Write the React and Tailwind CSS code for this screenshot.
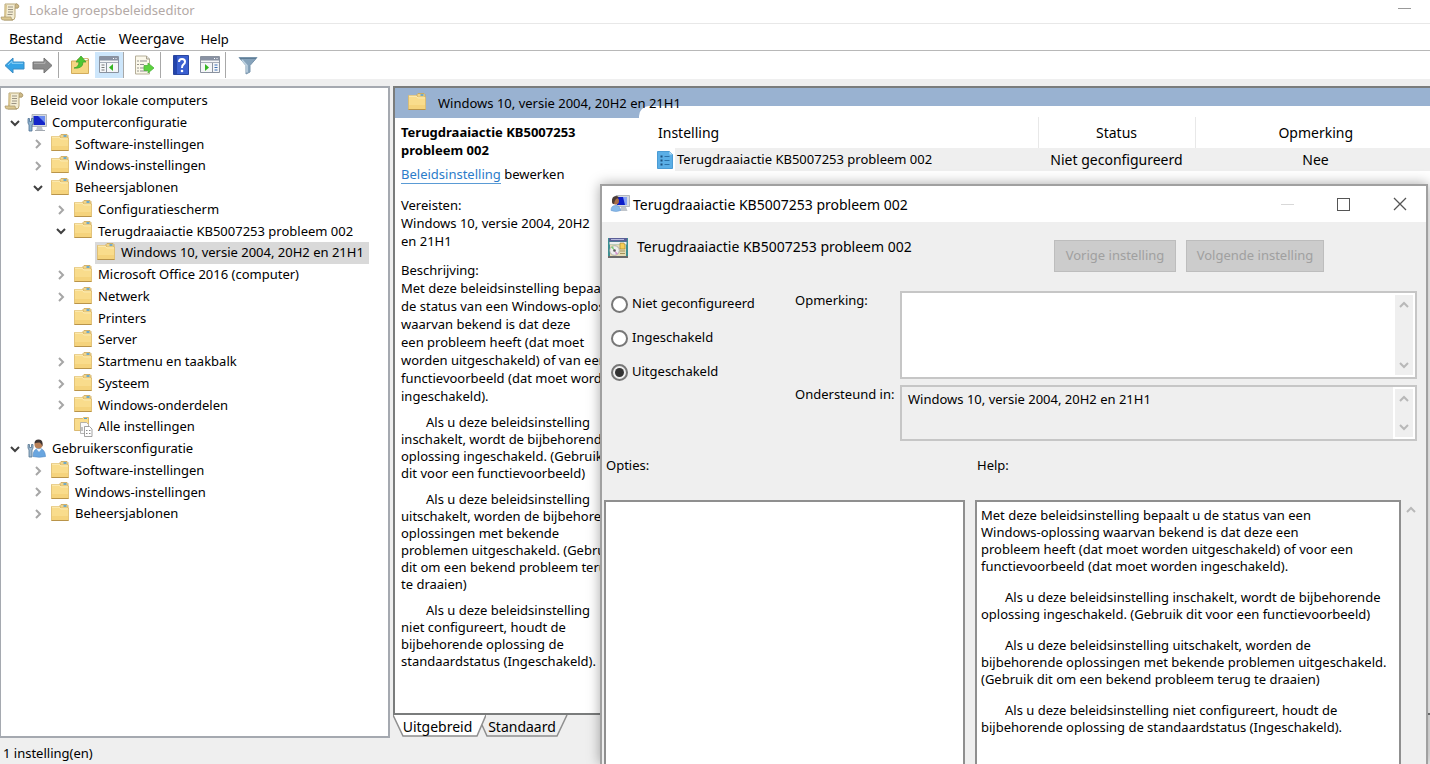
import { useState } from "react";

const treeItems = [
  { id: 1, label: "Computerconfiguratie", level: 0, state: "open", icon: "computer" },
  { id: 2, label: "Software-instellingen", level: 1, state: "closed", icon: "folder" },
  { id: 3, label: "Windows-instellingen", level: 1, state: "closed", icon: "folder" },
  { id: 4, label: "Beheersjablonen", level: 1, state: "open", icon: "folder" },
  { id: 5, label: "Configuratiescherm", level: 2, state: "closed", icon: "folder" },
  { id: 6, label: "Terugdraaiactie KB5007253 probleem 002", level: 2, state: "open", icon: "folder" },
  { id: 7, label: "Windows 10, versie 2004, 20H2 en 21H1", level: 3, icon: "folder" },
  { id: 8, label: "Microsoft Office 2016 (computer)", level: 2, state: "closed", icon: "folder" },
  { id: 9, label: "Netwerk", level: 2, state: "closed", icon: "folder" },
  { id: 10, label: "Printers", level: 2, icon: "folder" },
  { id: 11, label: "Server", level: 2, icon: "folder" },
  { id: 12, label: "Startmenu en taakbalk", level: 2, state: "closed", icon: "folder" },
  { id: 13, label: "Systeem", level: 2, state: "closed", icon: "folder" },
  { id: 14, label: "Windows-onderdelen", level: 2, state: "closed", icon: "folder" },
  { id: 15, label: "Alle instellingen", level: 2, icon: "all" },
  { id: 16, label: "Gebruikersconfiguratie", level: 0, state: "open", icon: "user" },
  { id: 17, label: "Software-instellingen", level: 1, state: "closed", icon: "folder" },
  { id: 18, label: "Windows-instellingen", level: 1, state: "closed", icon: "folder" },
  { id: 19, label: "Beheersjablonen", level: 1, state: "closed", icon: "folder" },
];

const indents = ["pl-[8px]", "pl-[31px]", "pl-[54px]", "pl-[77px]"];

const description = [
  [
    "Als u deze beleidsinstelling",
    "inschakelt, wordt de bijbehorende",
    "oplossing ingeschakeld. (Gebruik",
    "dit voor een functievoorbeeld)",
  ],
  [
    "Als u deze beleidsinstelling",
    "uitschakelt, worden de bijbehorende",
    "oplossingen met bekende",
    "problemen uitgeschakeld. (Gebruik",
    "dit om een bekend probleem terug",
    "te draaien)",
  ],
  [
    "Als u deze beleidsinstelling",
    "niet configureert, houdt de",
    "bijbehorende oplossing de",
    "standaardstatus (Ingeschakeld).",
  ],
];

const helpText = [
  [
    "Als u deze beleidsinstelling inschakelt, wordt de bijbehorende",
    "oplossing ingeschakeld. (Gebruik dit voor een functievoorbeeld)",
  ],
  [
    "Als u deze beleidsinstelling uitschakelt, worden de",
    "bijbehorende oplossingen met bekende problemen uitgeschakeld.",
    "(Gebruik dit om een bekend probleem terug te draaien)",
  ],
  [
    "Als u deze beleidsinstelling niet configureert, houdt de",
    "bijbehorende oplossing de standaardstatus (Ingeschakeld).",
  ],
];

const states = ["Niet geconfigureerd", "Ingeschakeld", "Uitgeschakeld"];

function Lines({ lines, className }) {
  return (
    <p className={className}>
      {lines.map((line) => (
        <span key={line} className="block whitespace-nowrap">
          {line}
        </span>
      ))}
    </p>
  );
}

function Chevron({ dir, className }) {
  const paths = {
    up: "M2 7l4-4 4 4",
    down: "M2 4l4 4 4-4",
    right: "M4 2l4 4-4 4",
  };
  return (
    <svg viewBox="0 0 12 12" className={className} fill="none" stroke="currentColor" strokeWidth="2">
      <path d={paths[dir]} />
    </svg>
  );
}

function ScrollIcon() {
  return (
    <svg viewBox="0 0 20 20" className="size-5 shrink-0">
      <path d="M5 2h12q2 1 1 4h-3v9q0 3-3 3H4l1-5z" fill="#f3ecd2" stroke="#b9a878" />
      <path d="M5 3l2 0-1 14-2 0z" fill="#d8c48f" />
      <path d="M15 6V3q1-2 3-.5T18 6z" fill="#cdb987" stroke="#a8956a" strokeWidth=".7" />
      <path d="M1 15h10q0 3 2 3H3q-2 0-2-3z" fill="#dcc890" stroke="#a8956a" strokeWidth=".7" />
      <path d="M8 5h5M8 7.500h5M8 10h5M7.500 12.500h5" stroke="#9b9484" />
    </svg>
  );
}

function FolderIcon() {
  return (
    <svg viewBox="0 0 20 20" className="size-5 shrink-0">
      <path d="M10 1.500l1-1h6l1 1V5h-8z" fill="#f0d48a" stroke="#c9a354" strokeWidth=".8" />
      <path d="M13.500 2h3" stroke="#4f9fd8" strokeWidth="1.600" />
      <path d="M1.500 2.500h8l1.500 1.500h7.500v12.500h-17z" fill="#f9dc8c" stroke="#dcb968" strokeWidth=".8" />
      <path d="M2 3.200h7.200l1.500 1.700H18" stroke="#fdeebb" fill="none" />
      <path d="M2 12h16v4H2z" fill="#f5d37c" />
      <path d="M1.500 16.500h17" stroke="#b9944a" />
    </svg>
  );
}

function AllSettingsIcon() {
  return (
    <svg viewBox="0 0 20 20" className="size-5 shrink-0">
      <path d="M1.500 1.500h8l1-1h5v13h-14z" fill="#f9dc8c" stroke="#d2ac5c" strokeWidth=".8" />
      <path d="M11 1.500h3" stroke="#4f9fd8" />
      <path d="M7.500 5.500h6l2 2v9h-8z" fill="#fafafa" stroke="#a3a3a3" strokeWidth=".8" />
      <path d="M11.500 9.500h5l2.500 2.500v7.500h-7.500z" fill="#fff" stroke="#8d8d8d" strokeWidth=".8" />
      <path d="M13 13.500h1.500M16 13.500h1.500M13 16.500h1.500M16 16.500h1.500M9 10v4" stroke="#888" />
    </svg>
  );
}

function ComputerIcon() {
  return (
    <svg viewBox="0 0 20 20" className="size-5 shrink-0">
      <path d="M5 1.500h14.500v12H5z" fill="#d5d9df" stroke="#a3a9b1" strokeWidth=".8" />
      <path d="M6.500 3h11.500v9H6.500z" fill="#1526c9" />
      <path d="M11 3h7v7z" fill="#6b8cf0" />
      <path d="M10 14h5l1 3.500H9z" fill="#c0c5cb" />
      <path d="M8 17.500h10" stroke="#a3a9b1" />
      <path d="M1 5.500h1.500v3h2v-3H6.500V10L5 12v6H2v-6l-1-2z" fill="#8fb2cf" stroke="#4b6f92" strokeWidth=".8" />
    </svg>
  );
}

function UserIcon() {
  return (
    <svg viewBox="0 0 20 20" className="size-5 shrink-0">
      <path d="M6 17.500q0-8 6-8t6.500 8q-6 1.500-12.500 0z" fill="#69a6e0" stroke="#5a90ca" strokeWidth=".7" />
      <path d="M9.500 10l2.500 3 2.500-3z" fill="#eef4fb" />
      <circle cx="11.500" cy="5.500" r="4" fill="#b98057" />
      <path d="M7.500 4.500q0-4 4-4t4 4v3q-1-3-3-4-3 0-5 1z" fill="#3c3433" />
      <path d="M1 5.500h1.500v3h2v-3H6V9l-1 2v7H2v-7l-1-2z" fill="#9fb9d0" stroke="#54748f" strokeWidth=".8" />
    </svg>
  );
}

function DialogIcon() {
  return (
    <svg viewBox="0 0 20 20" className="size-5 shrink-0">
      <path d="M6 1.500h13.500v11H6z" fill="#d5d9df" stroke="#a3a9b1" strokeWidth=".8" />
      <path d="M7 3h9v8H7z" fill="#0c1cc8" />
      <path d="M13 3h4v8h-2z" fill="#86a2f5" />
      <path d="M11 13h5l1.500 4h-8z" fill="#c0c5cb" />
      <path d="M1 16.500q0-5 4.500-5t5 5q-4.500 2-9.500 0z" fill="#86b9ea" stroke="#6a9bd0" strokeWidth=".6" />
      <circle cx="5.500" cy="7" r="3.500" fill="#a86e48" />
      <path d="M2 8q-.500-6 4-6 3 0 2.500 2-3.500 0-4.500 6Q2 10 2 8z" fill="#4a3b35" />
    </svg>
  );
}

function PackageIcon() {
  return (
    <svg viewBox="0 0 20 20" className="size-5 shrink-0">
      <path d="M0 0h20v20H0z" fill="#3d8f92" />
      <path d="M1 0h18v3.500H1z" fill="#5b5f98" />
      <path d="M3 1.500h13" stroke="#b6b9dd" />
      <path d="M1.500 4h17v2.500h-17z" fill="#eee" />
      <path d="M2 6.500h16V18H2z" fill="#e5dcb4" />
      <circle cx="6.500" cy="12.500" r="4.800" fill="#eee" stroke="#999" strokeWidth=".7" />
      <path d="M6.500 12.500L3 9.500l2-1.300z" fill="#7ccb72" />
      <path d="M6.500 12.500l3.500 3-2 1.300z" fill="#d48fd0" />
      <circle cx="6.500" cy="12.500" r="1.300" fill="#555" />
      <path d="M12 5h4l1 2v4h-5z" fill="#f5cd57" stroke="#9c7c29" strokeWidth=".6" />
      <path d="M12 13h5M12 15.500h5" stroke="#a3935c" />
      <path d="M0 19h20" stroke="#6a6a6a" strokeWidth="2" />
    </svg>
  );
}

function SettingIcon() {
  return (
    <svg viewBox="0 0 18 18" className="size-[18px] shrink-0">
      <path d="M1.500.500h12l3 3v14h-15z" fill="#5aaee6" stroke="#4a9bd4" />
      <path d="M13.500.500v3h3z" fill="#b9dff6" />
      <path d="M4.500 5.500h2M4.500 9.500h2M4.500 13.500h2" stroke="#1c4f7d" strokeWidth="2" />
      <path d="M8.500 5.500h5M8.500 9.500h5M8.500 13.500h5" stroke="#2b71a8" />
    </svg>
  );
}

const treeIcons = {
  folder: FolderIcon,
  all: AllSettingsIcon,
  computer: ComputerIcon,
  user: UserIcon,
};

function ArrowIcon({ back }) {
  return (
    <svg viewBox="0 0 22 20" className="h-5 w-[22px]">
      {back ? (
        <path d="M1 10.500l8-7.500v4h11v7H9v4z" fill="#35a3e6" stroke="#3b8cc4" />
      ) : (
        <path d="M21 10.500l-8-7.500v4H2v7h11v4z" fill="#8b8b8b" stroke="#757575" />
      )}
      {back ? (
        <path d="M4 10l4-3.700v2h11" fill="none" stroke="#92d4f7" />
      ) : (
        <path d="M3 8.300h11v-2" fill="none" stroke="#b5b5b5" />
      )}
    </svg>
  );
}

function FolderUpIcon() {
  return (
    <svg viewBox="0 0 20 20" className="size-5">
      <path d="M1.500 6h5l1.500-2h10.500v14.500h-17z" fill="#f5d683" stroke="#d2ac5c" />
      <path d="M12 3.500h6v2h-6z" fill="#fff" stroke="#c49b48" strokeWidth=".6" />
      <path d="M4 13q5-1 5-6H6l5-6 5 6h-3q0 7-9 6z" fill="#4cc730" stroke="#3fa22c" strokeWidth=".8" />
    </svg>
  );
}

function PaneIcon({ flip }) {
  return (
    <svg viewBox="0 0 20 18" className="h-[18px] w-5">
      <path d="M.500.500h19v16H.500z" fill="#f5f6f8" stroke="#8a929f" />
      <path d="M1 1h18v3.500H1z" fill="#8992a3" />
      <path d="M14 2.500h1M16.500 2.500h1" stroke="#fff" />
      <path d="M1 6.500h18" stroke="#a8aeb9" />
      {flip ? (
        <>
          <path d="M12.500 7v9.500" stroke="#8a929f" />
          <path d="M5 8l4 3.500L5 15z" fill="#35b522" />
          <path d="M14.500 9h3M14.500 11.500h3M14.500 14h3" stroke="#3a6fb5" />
        </>
      ) : (
        <>
          <path d="M7.500 7v9.500" stroke="#8a929f" />
          <path d="M14 8l-4 3.500 4 3.500z" fill="#35b522" />
          <path d="M2.500 9h3M2.500 11.500h3M2.500 14h3" stroke="#777" />
        </>
      )}
    </svg>
  );
}

function ExportIcon() {
  return (
    <svg viewBox="0 0 20 20" className="size-5">
      <path d="M1.500 1h11l3 3v15h-14z" fill="#fbf8ea" stroke="#b5ae99" />
      <path d="M12.500 1v3h3" fill="#ddd" stroke="#aaa38d" />
      <path d="M3.500 6h1M3.500 9.500h1M3.500 13h1M3.500 16h1" stroke="#333" />
      <path d="M6 6h7M6 9.500h4M6 13h4M6 16h7" stroke="#8f8f8f" />
      <path d="M10 10.500h4V8l6 5-6 5v-2.500h-4z" fill="#5bd23e" stroke="#4fb33c" strokeWidth=".8" />
    </svg>
  );
}

function HelpIcon() {
  return (
    <svg viewBox="0 0 16 20" className="h-5 w-4">
      <path d="M.500.500h15v19H.500z" fill="#3a5fd0" stroke="#2a469f" />
      <path d="M1 1h3v18H1z" fill="#2344ab" />
      <path d="M6 7q0-3 3-3t3 2.700q0 1.600-1.500 2.600T9 13" fill="none" stroke="#fff" strokeWidth="2" />
      <circle cx="9" cy="16" r="1.300" fill="#fff" />
    </svg>
  );
}

function FunnelIcon() {
  return (
    <svg viewBox="0 0 20 20" className="size-5">
      <path d="M1 2.500h18l-7 8V17l-4 2v-8.500z" fill="#86a3bb" stroke="#7a96ad" />
      <path d="M2 3.500h16" stroke="#5f7d96" />
      <path d="M4 5l5 5.500v7" stroke="#c2d5e3" fill="none" strokeWidth="1.500" />
    </svg>
  );
}

function Separator() {
  return <span className="h-[26px] w-px bg-[#a8a8a8]" />;
}

function ScrollButtons() {
  return (
    <div className="flex w-[22px] shrink-0 flex-col items-center justify-between border-2 border-white bg-[#efefef] pt-[5px] pb-[4px] text-[#b8b8b8]">
      <button aria-label="Omhoog">
        <Chevron dir="up" className="size-3" />
      </button>
      <button aria-label="Omlaag">
        <Chevron dir="down" className="size-3" />
      </button>
    </div>
  );
}

function Tree() {
  const [selected, setSelected] = useState(7);

  return (
    <nav className="w-[390px] shrink-0 border-2 border-l border-[#a5a9b0] bg-white">
      <ul className="mt-[2px] grid h-[435px] auto-rows-fr text-[13px]">
        <li className="flex items-center gap-[6px] pl-[3px]">
          <ScrollIcon />
          Beleid voor lokale computers
        </li>
        {treeItems.map((item) => {
          const Icon = treeIcons[item.icon];
          return (
            <li key={item.id} className={`flex items-center ${indents[item.level]}`}>
              <span className="flex w-[17px] shrink-0">
                {item.state === "open" && <Chevron dir="down" className="size-3 text-[#404040]" />}
                {item.state === "closed" && <Chevron dir="right" className="size-3 text-[#a6a6a6]" />}
              </span>
              <button
                onClick={() => setSelected(item.id)}
                className={`flex h-[22px] items-center gap-[5px] pr-[5px] pl-[1px] whitespace-nowrap ${
                  selected === item.id ? "bg-[#d9d9d9]" : ""
                }`}
              >
                <Icon />
                {item.label}
              </button>
            </li>
          );
        })}
      </ul>
    </nav>
  );
}

function PolicyDialog() {
  const [value, setValue] = useState("Uitgeschakeld");

  return (
    <section
      role="dialog"
      aria-labelledby="dialog-title"
      className="absolute top-[184px] right-[2px] bottom-0 left-[600px] z-20 flex flex-col overflow-hidden border-2 border-b-0 border-[#a0a0a0] bg-[#efefef] text-[13px] shadow-[0_0_12px_rgba(0,0,0,0.35)]"
    >
      <header className="flex h-[36px] shrink-0 items-center gap-[3px] bg-white pl-[8px]">
        <DialogIcon />
        <h2 id="dialog-title" className="text-[14px]">
          Terugdraaiactie KB5007253 probleem 002
        </h2>
        <div className="ml-auto flex items-center gap-[43px] pr-[19px] text-[#555]">
          <button aria-label="Minimaliseren" className="h-px w-[13px] bg-[#d8d8d8]" />
          <button aria-label="Maximaliseren" className="size-[13px] border border-[#555]" />
          <button aria-label="Sluiten">
            <svg viewBox="0 0 14 14" className="size-[14px]" stroke="currentColor" strokeWidth="1.300">
              <path d="M1 1l12 12M13 1L1 13" />
            </svg>
          </button>
        </div>
      </header>

      <div className="flex h-[69px] shrink-0 items-start pt-[16px] pr-[102px] pl-[6px]">
        <PackageIcon />
        <p className="pl-[9px] text-[14px] leading-[18px]">Terugdraaiactie KB5007253 probleem 002</p>
        <div className="mt-[2px] ml-auto flex gap-[10px] text-[#a0a0a0]">
          <button disabled className="h-8 w-[122px] border border-[#bdbdbd] bg-[#cccccc] whitespace-nowrap">
            Vorige instelling
          </button>
          <button disabled className="h-8 w-[138px] border border-[#bdbdbd] bg-[#cccccc] whitespace-nowrap">
            Volgende instelling
          </button>
        </div>
      </div>

      <div className="flex shrink-0 pr-[9px]">
        <fieldset className="flex w-[193px] shrink-0 flex-col gap-[14px] pt-[3px] pl-[9px]">
          {states.map((state) => (
            <label key={state} className="flex h-5 items-center gap-[4px]">
              <input
                type="radio"
                name="state"
                checked={value === state}
                onChange={() => setValue(state)}
                className="size-[17px] appearance-none rounded-full border-2 border-[#777] bg-white p-[2px] checked:bg-[#333] checked:bg-clip-content"
              />
              {state}
            </label>
          ))}
        </fieldset>
        <div className="grid flex-1 grid-cols-[105px_1fr] gap-y-[6px]">
          <label htmlFor="comment">Opmerking:</label>
          <div className="flex h-[88px] border-2 border-[#c6c6c6] bg-white">
            <textarea id="comment" className="flex-1 resize-none bg-white outline-none" />
            <ScrollButtons />
          </div>
          <label htmlFor="supported" className="whitespace-nowrap">
            Ondersteund in:
          </label>
          <div className="flex h-14 border-2 border-[#c6c6c6] bg-[#efefef]">
            <textarea
              id="supported"
              readOnly
              className="flex-1 resize-none px-[6px] pt-[3px] outline-none"
              value="Windows 10, versie 2004, 20H2 en 21H1"
            />
            <ScrollButtons />
          </div>
        </div>
      </div>

      <div className="flex min-h-0 flex-1 gap-[10px] pt-[15px] pr-[25px] pl-[2px]">
        <div className="flex w-[361px] shrink-0 flex-col">
          <h3 className="h-[44px] pl-[2px]">Opties:</h3>
          <div className="flex-1 border-2 border-b-0 border-[#8f8f8f] bg-white" />
        </div>
        <div className="relative flex flex-1 flex-col">
          <h3 className="h-[44px] pl-[2px]">Help:</h3>
          <div className="flex-1 border-2 border-b-0 border-[#8f8f8f] bg-white pt-[5px] pl-[4px] leading-[17px]">
            <Lines
              lines={[
                "Met deze beleidsinstelling bepaalt u de status van een",
                "Windows-oplossing waarvan bekend is dat deze een",
                "probleem heeft (dat moet worden uitgeschakeld) of voor een",
                "functievoorbeeld (dat moet worden ingeschakeld).",
              ]}
            />
            {helpText.map((lines) => (
              <Lines key={lines[0]} lines={lines} className="mt-[14px] indent-[24px] [&>span+span]:indent-0" />
            ))}
          </div>
          <button aria-label="Omhoog" className="absolute top-[49px] -right-[16px] text-[#b8b8b8]">
            <Chevron dir="up" className="size-3" />
          </button>
        </div>
      </div>
    </section>
  );
}

export default function App() {
  return (
    <main className="relative flex h-screen flex-col overflow-hidden bg-[#efefef] font-['Noto_Sans','Open_Sans',sans-serif] text-[13px] text-black">
      <header className="flex h-6 shrink-0 items-center gap-[9px] border-b border-[#e8e8e8] bg-white text-[#b3a9a6]">
        <ScrollIcon />
        <h1 className="pb-[2px]">Lokale groepsbeleidseditor</h1>
        <button aria-label="Minimaliseren" className="mr-[19px] mb-[6px] ml-auto h-px w-[13px] bg-[#999]" />
      </header>

      <nav className="flex h-[27px] shrink-0 items-baseline gap-[13px] border-b border-[#b8b8b8] bg-white pt-[4px] pl-[9px]">
        <button className="text-[14px]">Bestand</button>
        <button>Actie</button>
        <button className="text-[14px]">Weergave</button>
        <button className="ml-[3px]">Help</button>
      </nav>

      <div className="mb-[7px] flex h-7 shrink-0 items-center bg-white pl-[4px]">
        <button aria-label="Vorige">
          <ArrowIcon back />
        </button>
        <button aria-label="Volgende" className="mr-[5px] ml-[5px]">
          <ArrowIcon />
        </button>
        <Separator />
        <button aria-label="Bovenliggende map" className="mr-[5px] ml-[11px]">
          <FolderUpIcon />
        </button>
        <button aria-label="Consolestructuur" className="flex h-[26px] w-7 items-center justify-center bg-[#cde6fb]">
          <PaneIcon />
        </button>
        <Separator />
        <button aria-label="Lijst exporteren" className="mr-[6px] ml-[10px]">
          <ExportIcon />
        </button>
        <Separator />
        <button aria-label="Help" className="mr-[11px] ml-[12px]">
          <HelpIcon />
        </button>
        <button aria-label="Actievenster" className="mr-[5px]">
          <PaneIcon flip />
        </button>
        <Separator />
        <button aria-label="Filter" className="ml-[12px]">
          <FunnelIcon />
        </button>
      </div>

      <div className="flex min-h-0 flex-1">
        <Tree />
        <div className="ml-[3px] flex min-w-0 flex-1 flex-col">
          <section className="flex min-h-0 flex-1 flex-col border-2 border-r-0 border-[#7a7c7c] bg-white">
            <header className="flex h-[30px] shrink-0 items-center gap-[11px] bg-[#99b2d1] pl-[12px]">
              <FolderIcon />
              <span className="z-10 pt-[2px]">Windows 10, versie 2004, 20H2 en 21H1</span>
            </header>
            <div className="flex min-h-0 flex-1">
              <article className="w-[244px] shrink-0 overflow-hidden pt-[5px] pl-[6px] leading-[18px]">
                <h2 className="font-bold">
                  Terugdraaiactie KB5007253
                  <br />
                  probleem 002
                </h2>
                <p className="mt-[6px]">
                  <a href="#edit" className="border-b border-[#5a9bd5] text-[#2b7cc9]">
                    Beleidsinstelling
                  </a>{" "}
                  bewerken
                </p>
                <p className="mt-[13px]">Vereisten:</p>
                <Lines lines={["Windows 10, versie 2004, 20H2", "en 21H1"]} />
                <p className="mt-[11px]">Beschrijving:</p>
                <Lines
                  lines={[
                    "Met deze beleidsinstelling bepaalt u",
                    "de status van een Windows-oplossing",
                    "waarvan bekend is dat deze",
                    "een probleem heeft (dat moet",
                    "worden uitgeschakeld) of van een",
                    "functievoorbeeld (dat moet worden",
                    "ingeschakeld).",
                  ]}
                />
                {description.map((lines) => (
                  <Lines
                    key={lines[1]}
                    lines={lines}
                    className="mt-[9px] indent-[25px] leading-[17px] [&>span+span]:indent-0"
                  />
                ))}
              </article>
              <div className="-mt-[12px] flex-1 rounded-tl-[10px] bg-white pt-[11px]">
                <table className="w-full table-fixed border-collapse text-[14px]">
                  <colgroup>
                    <col />
                    <col className="w-[157px]" />
                    <col className="w-[235px]" />
                  </colgroup>
                  <thead>
                    <tr className="h-[31px]">
                      <th className="pl-[19px] text-left font-normal">Instelling</th>
                      <th className="border-x border-[#e8e8e8] font-normal">Status</th>
                      <th className="pl-[6px] font-normal">Opmerking</th>
                    </tr>
                  </thead>
                  <tbody>
                    <tr className="h-[23px]">
                      <td className="py-0 pl-[17px] text-[13px]">
                        <div className="flex items-center">
                          <SettingIcon />
                          <span className="ml-[1px] flex-1 bg-[#efefef] pl-[2px] leading-[23px]">
                            Terugdraaiactie KB5007253 probleem 002
                          </span>
                        </div>
                      </td>
                      <td className="bg-[#efefef] text-center">Niet geconfigureerd</td>
                      <td className="bg-[#efefef] pl-[6px] text-center">Nee</td>
                    </tr>
                  </tbody>
                </table>
              </div>
            </div>
          </section>
          <div className="flex h-[23px] shrink-0 text-[14px]">
            <button className="relative w-[93px]">
              <svg viewBox="0 0 93 23" className="absolute inset-0 h-[23px] w-[93px]">
                <path d="M0 0l10 21h74L93 0" fill="#fff" stroke="#8f8f8f" strokeWidth="1.500" />
              </svg>
              <span className="relative pr-[4px]">Uitgebreid</span>
            </button>
            <button className="relative -ml-[9px] w-[92px]">
              <svg viewBox="0 0 92 23" className="absolute inset-0 h-[23px] w-[92px]">
                <path d="M5 10l5 11h70L90 0" fill="none" stroke="#8f8f8f" strokeWidth="1.500" />
              </svg>
              <span className="relative pr-[2px]">Standaard</span>
            </button>
          </div>
        </div>
      </div>

      <footer className="flex h-[26px] shrink-0 items-center pt-[6px] pl-[3px]">1 instelling(en)</footer>

      <PolicyDialog />
    </main>
  );
}
